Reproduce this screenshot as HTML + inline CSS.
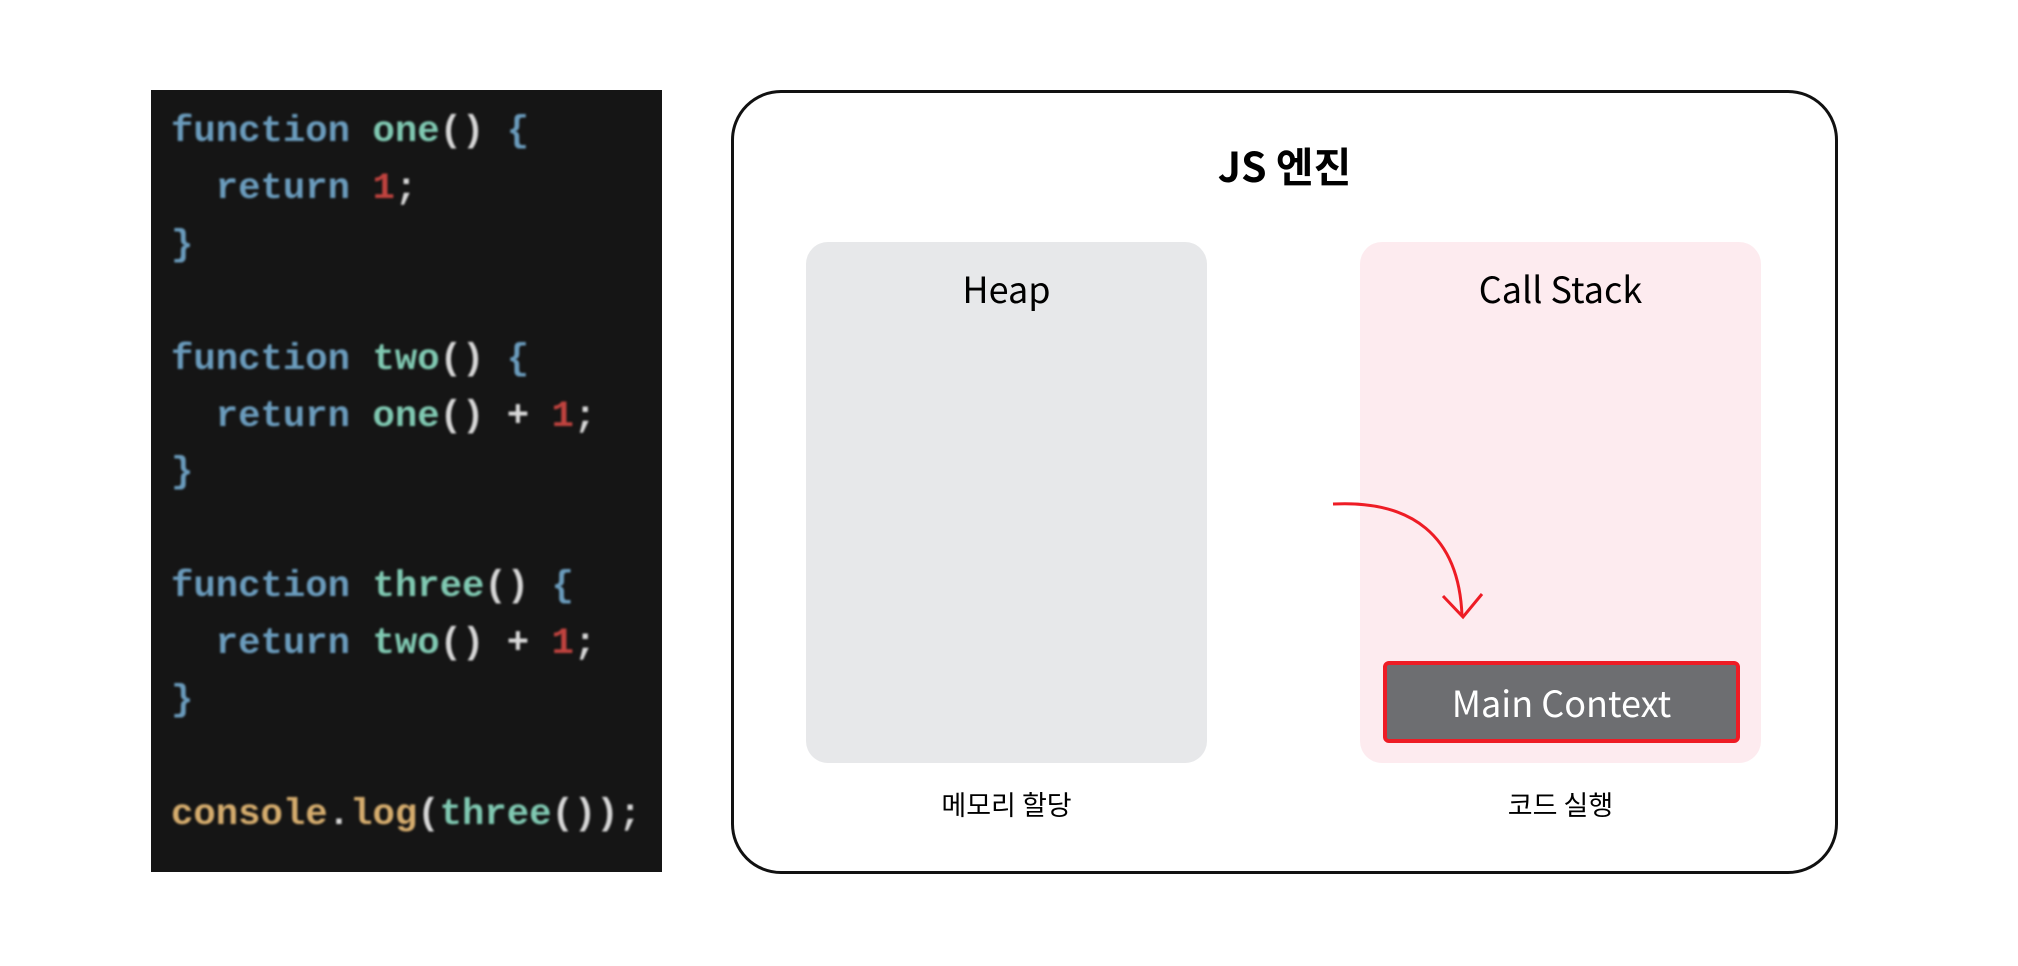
<!DOCTYPE html>
<html><head><meta charset="utf-8"><style>
body{margin:0;width:2018px;height:966px;background:#fff;position:relative;overflow:hidden;font-family:"Noto Sans CJK KR","Liberation Sans",sans-serif}
.code{position:absolute;left:151px;top:90px;width:511px;height:782px;background:#151515}
.code pre{position:absolute;left:20px;top:14px;margin:0;font-family:"Liberation Mono","DejaVu Sans Mono",monospace;font-size:37.3px;line-height:56.9px;font-weight:bold;color:#6b9cbd;filter:blur(1px)}
.t{color:#80c9b2}.p{color:#d8d8d8}.n{color:#c0433f}.y{color:#d6ad6e}
.box{position:absolute;left:731px;top:90px;width:1101px;height:778px;border:3px solid #111;border-radius:50px}
.title{position:absolute;left:731px;width:1107px;top:136px;line-height:56px;text-align:center;font-size:41px;font-weight:bold}
.col{position:absolute;top:242px;width:401px;height:521px;border-radius:22px}
.lbl{position:absolute;top:265px;line-height:46px;font-size:36px;text-align:center;width:401px}
.sub{position:absolute;top:786px;line-height:36px;font-size:27px;text-align:center;width:401px}
.mc{position:absolute;left:1383px;top:661px;width:349px;height:74px;background:#6d6e71;border:4px solid #ee1c25;border-radius:6px;color:#fff;font-size:36px;text-align:center;line-height:74px}
</style></head><body>
<div class="code"><pre>function <span class="t">one</span><span class="p">()</span> {
  return <span class="n">1</span><span class="p">;</span>
}

function <span class="t">two</span><span class="p">()</span> {
  return <span class="t">one</span><span class="p">()</span> <span class="p">+</span> <span class="n">1</span><span class="p">;</span>
}

function <span class="t">three</span><span class="p">()</span> {
  return <span class="t">two</span><span class="p">()</span> <span class="p">+</span> <span class="n">1</span><span class="p">;</span>
}

<span class="y">console</span><span class="p">.</span><span class="y">log</span><span class="p">(</span><span class="t">three</span><span class="p">());</span></pre></div>
<div class="box"></div>
<div class="title">JS 엔진</div>
<div class="col" style="left:806px;background:#e7e8ea"></div>
<div class="col" style="left:1360px;background:#fdebef"></div>
<div class="lbl" style="left:806px">Heap</div>
<div class="lbl" style="left:1360px">Call Stack</div>
<div class="sub" style="left:806px">메모리 할당</div>
<div class="sub" style="left:1360px">코드 실행</div>
<div class="mc">Main Context</div>
<svg style="position:absolute;left:0;top:0" width="2018" height="966"><path d="M1333 504 C1411 500 1459 535 1462 616" fill="none" stroke="#ee1c25" stroke-width="3"/><path d="M1443 596 L1463 617 L1482 594" fill="none" stroke="#ee1c25" stroke-width="3"/></svg>
</body></html>
